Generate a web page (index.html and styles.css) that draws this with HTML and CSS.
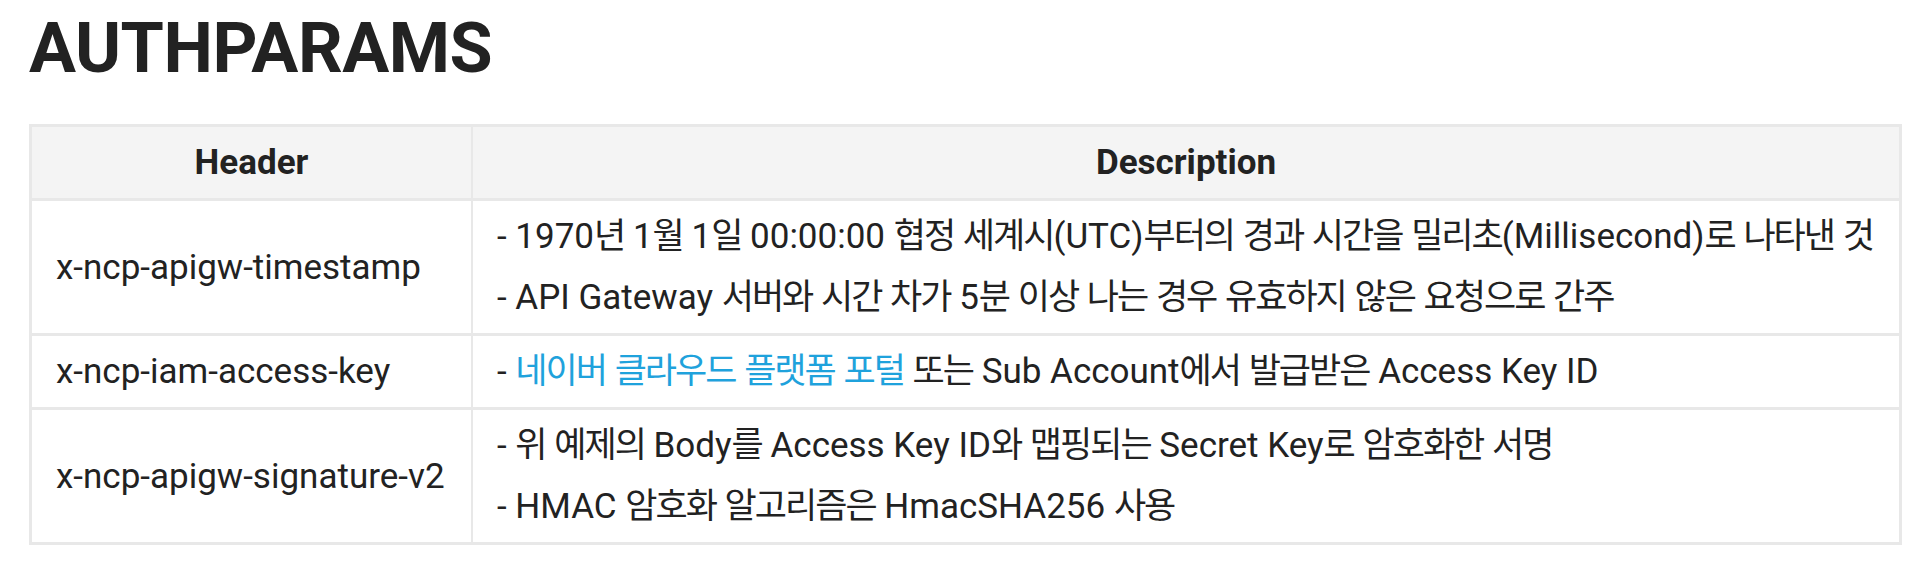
FILE: index.html
```html
<!DOCTYPE html>
<html lang="ko">
<head>
<meta charset="utf-8">
<title>AUTHPARAMS</title>
<link rel="stylesheet" href="styles.css">
</head>
<body>
<main class="page">
  <h2 class="title">AUTHPARAMS</h2>
  <table class="params">
    <colgroup>
      <col class="col-header">
      <col class="col-desc">
    </colgroup>
    <thead>
      <tr>
        <th>Header</th>
        <th>Description</th>
      </tr>
    </thead>
    <tbody>
      <tr>
        <td class="name">x-ncp-apigw-timestamp</td>
        <td class="desc">
          <div class="line">- 1970<span class="ko">년</span> 1<span class="ko">월</span> 1<span class="ko">일</span> 00:00:00 <span class="ko">협정</span> <span class="ko">세계시</span>(UTC)<span class="ko">부터의</span> <span class="ko">경과</span> <span class="ko">시간을</span> <span class="ko">밀리초</span>(Millisecond)<span class="ko">로</span> <span class="ko">나타낸</span> <span class="ko">것</span></div>
          <div class="line">- API Gateway <span class="ko">서버와</span> <span class="ko">시간</span> <span class="ko">차가</span> 5<span class="ko">분</span> <span class="ko">이상</span> <span class="ko">나는</span> <span class="ko">경우</span> <span class="ko">유효하지</span> <span class="ko">않은</span> <span class="ko">요청으로</span> <span class="ko">간주</span></div>
        </td>
      </tr>
      <tr>
        <td class="name">x-ncp-iam-access-key</td>
        <td class="desc">
          <div class="line">- <a class="link" href="#"><span class="ko">네이버</span> <span class="ko">클라우드</span> <span class="ko">플랫폼</span> <span class="ko">포털</span></a> <span class="ko">또는</span> Sub Account<span class="ko">에서</span> <span class="ko">발급받은</span> Access Key ID</div>
        </td>
      </tr>
      <tr>
        <td class="name">x-ncp-apigw-signature-v2</td>
        <td class="desc">
          <div class="line">- <span class="ko">위</span> <span class="ko">예제의</span> Body<span class="ko">를</span> Access Key ID<span class="ko">와</span> <span class="ko">맵핑되는</span> Secret Key<span class="ko">로</span> <span class="ko">암호화한</span> <span class="ko">서명</span></div>
          <div class="line">- HMAC <span class="ko">암호화</span> <span class="ko">알고리즘은</span> HmacSHA256 <span class="ko">사용</span></div>
        </td>
      </tr>
    </tbody>
  </table>
</main>
</body>
</html>
```

FILE: styles.css
```css
html, body {
  margin: 0;
  padding: 0;
  background: #ffffff;
}

body {
  font-family: Roboto, "Noto Sans CJK KR", sans-serif;
  color: #222222;
}

.page {
  padding: 13px 26px 0 29px;
}

.title {
  margin: 0;
  font-size: 70px;
  line-height: 70px;
  font-weight: 700;
  color: #222222;
  letter-spacing: -0.5px;
}

.params {
  margin-top: 41px;
  width: 1873px;
  table-layout: fixed;
  border-collapse: separate;
  border-spacing: 0;
  border-top: 3px solid #e8e8e8;
  border-left: 3px solid #e8e8e8;
  font-size: 35px;
}

.col-header {
  width: 441px;
}

.params th,
.params td {
  border-right: 2px solid #e8e8e8;
  border-bottom: 3px solid #e8e8e8;
  padding: 5px 24px;
  line-height: 61px;
}

.params th:last-child,
.params td:last-child {
  border-right-width: 3px;
}

.params th {
  background: #f4f4f4;
  font-weight: 700;
  text-align: center;
  color: #222222;
}

.name {
  text-align: left;
  vertical-align: middle;
  white-space: nowrap;
}

.desc {
  vertical-align: middle;
}

.line {
  white-space: nowrap;
}

.ko {
  letter-spacing: -2px;
}

.link {
  color: #1fa2dc;
  text-decoration: none;
}
```
